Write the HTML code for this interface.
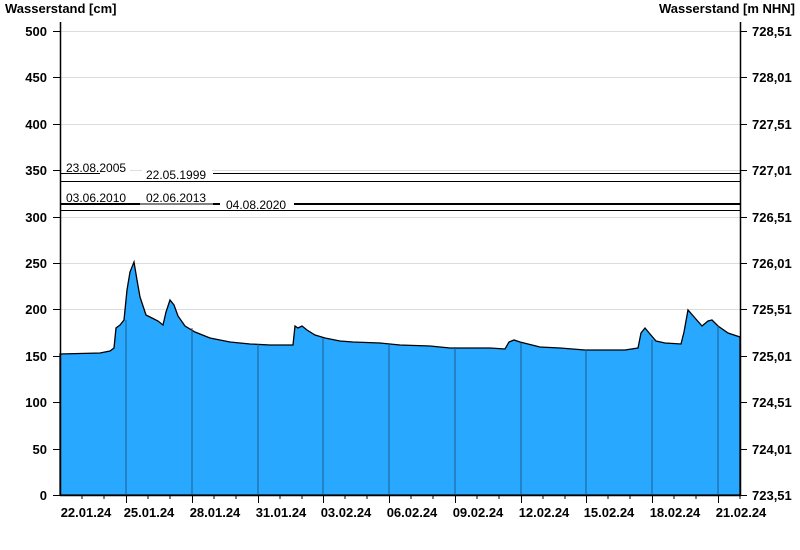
<!DOCTYPE html>
<html><head><meta charset="utf-8"><style>
html,body{margin:0;padding:0;background:#fff;width:800px;height:550px;overflow:hidden}
svg{display:block;font-family:"Liberation Sans",Arial,sans-serif}
.t{font-size:13px;font-weight:bold;fill:#000}
.s{font-size:12px;fill:#000}
</style></head><body>
<svg width="800" height="550" viewBox="0 0 800 550">
<text class="t" x="5" y="13">Wasserstand [cm]</text>
<text class="t" x="795" y="13" text-anchor="end">Wasserstand [m NHN]</text>
<g stroke="#ddd" stroke-width="1">
<line x1="60" x2="740" y1="31.5" y2="31.5"/><line x1="60" x2="740" y1="77.5" y2="77.5"/><line x1="60" x2="740" y1="124.5" y2="124.5"/><line x1="60" x2="740" y1="170.5" y2="170.5"/><line x1="60" x2="740" y1="217.5" y2="217.5"/><line x1="60" x2="740" y1="263.5" y2="263.5"/><line x1="60" x2="740" y1="309.5" y2="309.5"/><line x1="60" x2="740" y1="356.5" y2="356.5"/><line x1="60" x2="740" y1="402.5" y2="402.5"/><line x1="60" x2="740" y1="449.5" y2="449.5"/>
</g>
<path fill="#29a8ff" stroke="#000" stroke-width="1.3" d="M60,495 L60,354 L100,353 L110,351 L114,348 L116,328 L120,325 L124,320 L127,290 L130,272 L134,262 L137,280 L140,297 L146,315 L152,318 L158,321 L163,325 L166,312 L170,300 L174,305 L178,316 L185,326 L195,332 L210,338 L230,342 L250,344 L270,345 L293,345 L295,326 L298,328 L302,326 L307,330 L315,335 L325,338 L340,341 L353,342 L380,343 L400,345 L430,346 L450,348 L470,348 L490,348 L505,349 L509,342 L514,340 L520,342 L540,347 L560,348 L585,350 L625,350 L638,348 L641,333 L645,328 L650,334 L656,341 L665,343 L681,344 L684,332 L688,310 L695,318 L702,326 L708,321 L712,320 L718,326 L728,333 L740,337 L740,495 Z"/>
<g stroke="#1a5f8f" stroke-width="1">
<line x1="126" x2="126" y1="495" y2="320"/><line x1="192" x2="192" y1="495" y2="328"/><line x1="258" x2="258" y1="495" y2="344"/><line x1="323" x2="323" y1="495" y2="338"/><line x1="389" x2="389" y1="495" y2="344"/><line x1="455" x2="455" y1="495" y2="347"/><line x1="521" x2="521" y1="495" y2="343"/><line x1="586" x2="586" y1="495" y2="350"/><line x1="652" x2="652" y1="495" y2="340"/><line x1="718" x2="718" y1="495" y2="326"/>
</g>
<g stroke="#000">
<line x1="60" x2="100" y1="173.5" y2="173.5"/><line x1="213" x2="740" y1="173.5" y2="173.5"/>
<line x1="60" x2="740" y1="181.5" y2="181.5"/>
<line x1="60" x2="140" y1="204" y2="204" stroke-width="2"/><line x1="140" x2="213" y1="204" y2="204"/><line x1="213" x2="220" y1="204" y2="204" stroke-width="2"/><line x1="294" x2="740" y1="204" y2="204" stroke-width="2"/>
<line x1="60" x2="740" y1="210.5" y2="210.5"/>
</g>
<rect x="62" y="162" width="68" height="11" fill="#fff"/><rect x="142" y="169" width="70" height="11" fill="#fff"/>
<rect x="62" y="192" width="68" height="11" fill="#fff"/><rect x="142" y="192" width="70" height="11" fill="#fff"/><rect x="222" y="199" width="70" height="11" fill="#fff"/>
<text class="s" x="66" y="172">23.08.2005</text><text class="s" x="146" y="179">22.05.1999</text>
<text class="s" x="66" y="202">03.06.2010</text><text class="s" x="146" y="202">02.06.2013</text><text class="s" x="226" y="209">04.08.2020</text>
<g stroke="#000" stroke-width="1.5">
<line x1="60.5" x2="60.5" y1="22" y2="496"/><line x1="740.5" x2="740.5" y1="22" y2="496"/><line x1="60" x2="741" y1="495.5" y2="495.5"/>
</g>
<g stroke="#000" stroke-width="1">
<line x1="53" x2="60" y1="31.5" y2="31.5"/><line x1="53" x2="60" y1="77.5" y2="77.5"/><line x1="53" x2="60" y1="124.5" y2="124.5"/><line x1="53" x2="60" y1="170.5" y2="170.5"/><line x1="53" x2="60" y1="217.5" y2="217.5"/><line x1="53" x2="60" y1="263.5" y2="263.5"/><line x1="53" x2="60" y1="309.5" y2="309.5"/><line x1="53" x2="60" y1="356.5" y2="356.5"/><line x1="53" x2="60" y1="402.5" y2="402.5"/><line x1="53" x2="60" y1="449.5" y2="449.5"/><line x1="53" x2="60" y1="495.5" y2="495.5"/>
<line x1="740" x2="747" y1="31.5" y2="31.5"/><line x1="740" x2="747" y1="77.5" y2="77.5"/><line x1="740" x2="747" y1="124.5" y2="124.5"/><line x1="740" x2="747" y1="170.5" y2="170.5"/><line x1="740" x2="747" y1="217.5" y2="217.5"/><line x1="740" x2="747" y1="263.5" y2="263.5"/><line x1="740" x2="747" y1="309.5" y2="309.5"/><line x1="740" x2="747" y1="356.5" y2="356.5"/><line x1="740" x2="747" y1="402.5" y2="402.5"/><line x1="740" x2="747" y1="449.5" y2="449.5"/><line x1="740" x2="747" y1="495.5" y2="495.5"/>
<line x1="126.5" x2="126.5" y1="495" y2="503"/><line x1="192.5" x2="192.5" y1="495" y2="503"/><line x1="258.5" x2="258.5" y1="495" y2="503"/><line x1="323.5" x2="323.5" y1="495" y2="503"/><line x1="389.5" x2="389.5" y1="495" y2="503"/><line x1="455.5" x2="455.5" y1="495" y2="503"/><line x1="521.5" x2="521.5" y1="495" y2="503"/><line x1="586.5" x2="586.5" y1="495" y2="503"/><line x1="652.5" x2="652.5" y1="495" y2="503"/><line x1="718.5" x2="718.5" y1="495" y2="503"/>
<line x1="82" x2="82" y1="495" y2="499"/><line x1="104" x2="104" y1="495" y2="499"/><line x1="148" x2="148" y1="495" y2="499"/><line x1="170" x2="170" y1="495" y2="499"/><line x1="214" x2="214" y1="495" y2="499"/><line x1="236" x2="236" y1="495" y2="499"/><line x1="280" x2="280" y1="495" y2="499"/><line x1="302" x2="302" y1="495" y2="499"/><line x1="345" x2="345" y1="495" y2="499"/><line x1="367" x2="367" y1="495" y2="499"/><line x1="411" x2="411" y1="495" y2="499"/><line x1="433" x2="433" y1="495" y2="499"/><line x1="477" x2="477" y1="495" y2="499"/><line x1="499" x2="499" y1="495" y2="499"/><line x1="543" x2="543" y1="495" y2="499"/><line x1="565" x2="565" y1="495" y2="499"/><line x1="608" x2="608" y1="495" y2="499"/><line x1="630" x2="630" y1="495" y2="499"/><line x1="674" x2="674" y1="495" y2="499"/><line x1="696" x2="696" y1="495" y2="499"/><line x1="740" x2="740" y1="495" y2="499"/>
</g>
<g class="t" text-anchor="end">
<text x="47" y="36">500</text><text x="47" y="82">450</text><text x="47" y="129">400</text><text x="47" y="175">350</text><text x="47" y="222">300</text><text x="47" y="268">250</text><text x="47" y="314">200</text><text x="47" y="361">150</text><text x="47" y="407">100</text><text x="47" y="454">50</text><text x="47" y="500">0</text>
</g>
<g class="t">
<text x="752" y="36">728,51</text><text x="752" y="82">728,01</text><text x="752" y="129">727,51</text><text x="752" y="175">727,01</text><text x="752" y="222">726,51</text><text x="752" y="268">726,01</text><text x="752" y="314">725,51</text><text x="752" y="361">725,01</text><text x="752" y="407">724,51</text><text x="752" y="454">724,01</text><text x="752" y="500">723,51</text>
</g>
<g class="t" text-anchor="middle">
<text x="86" y="517">22.01.24</text><text x="149" y="517">25.01.24</text><text x="215" y="517">28.01.24</text><text x="281" y="517">31.01.24</text><text x="346" y="517">03.02.24</text><text x="412" y="517">06.02.24</text><text x="478" y="517">09.02.24</text><text x="544" y="517">12.02.24</text><text x="609" y="517">15.02.24</text><text x="675" y="517">18.02.24</text><text x="741" y="517">21.02.24</text>
</g>
</svg>
</body></html>
